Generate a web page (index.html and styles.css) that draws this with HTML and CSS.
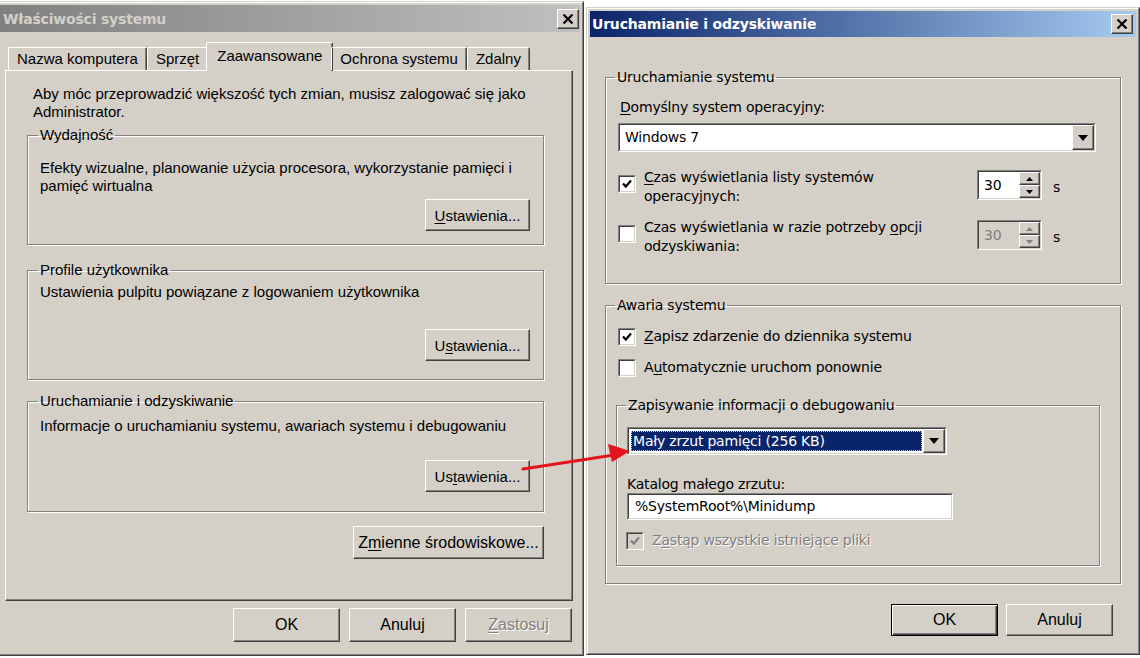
FILE: index.html
```html
<!DOCTYPE html>
<html lang="pl">
<head>
<meta charset="utf-8">
<title>Właściwości systemu</title>
<link rel="stylesheet" href="styles.css">
</head>
<body>
<div class="desk">

  <!-- System properties window (inactive) -->
  <section class="win win-left">
    <div class="win-in">
      <header class="caption caption-idle">
        <span class="caption-text">Właściwości systemu</span>
        <span class="cap-close"><svg width="12" height="10" viewBox="0 0 12 10"><path d="M1.5 0.5 L10.5 9.5 M10.5 0.5 L1.5 9.5" stroke="#000" stroke-width="2.2"/></svg></span>
      </header>
      <div class="left-body">
        <div class="tabs">
          <div class="tab">Nazwa komputera</div>
          <div class="tab">Sprzęt</div>
          <div class="tab tab-on">Zaawansowane</div>
          <div class="tab">Ochrona systemu</div>
          <div class="tab">Zdalny</div>
        </div>
        <div class="panel">
          <p class="intro">Aby móc przeprowadzić większość tych zmian, musisz zalogować się jako<br>Administrator.</p>

          <fieldset class="grp grp-perf">
            <legend>Wydajność</legend>
            <p class="desc">Efekty wizualne, planowanie użycia procesora, wykorzystanie pamięci i<br>pamięć wirtualna</p>
            <button class="btn btn-set"><u>U</u>stawienia...</button>
          </fieldset>

          <fieldset class="grp grp-prof">
            <legend>Profile użytkownika</legend>
            <p class="desc">Ustawienia pulpitu powiązane z logowaniem użytkownika</p>
            <button class="btn btn-set">U<u>s</u>tawienia...</button>
          </fieldset>

          <fieldset class="grp grp-boot">
            <legend>Uruchamianie i odzyskiwanie</legend>
            <p class="desc">Informacje o uruchamianiu systemu, awariach systemu i debugowaniu</p>
            <button class="btn btn-set">Us<u>t</u>awienia...</button>
          </fieldset>

          <button class="btn btn-env">Z<u>m</u>ienne środowiskowe...</button>
        </div>
        <div class="foot foot-left">
          <button class="btn">OK</button>
          <button class="btn">Anuluj</button>
          <button class="btn dis"><u>Z</u>astosuj</button>
        </div>
      </div>
    </div>
  </section>

  <!-- Startup and recovery dialog (active) -->
  <section class="win win-right">
    <div class="win-in">
      <header class="caption caption-live">
        <span class="caption-text">Uruchamianie i odzyskiwanie</span>
        <span class="cap-close"><svg width="12" height="10" viewBox="0 0 12 10"><path d="M1.5 0.5 L10.5 9.5 M10.5 0.5 L1.5 9.5" stroke="#000" stroke-width="2.2"/></svg></span>
      </header>
      <div class="right-body">

        <fieldset class="grp grp-r grp-start">
          <legend>Uruchamianie systemu</legend>
          <div class="lbl lbl-os"><u>D</u>omyślny system operacyjny:</div>
          <div class="field combo combo-os">
            <div class="field-in">
              <span class="combo-val">Windows 7</span>
              <span class="drop"><svg width="10" height="6" viewBox="0 0 10 6"><path d="M0 0 H10 L5 6 Z" fill="#000"/></svg></span>
            </div>
          </div>

          <div class="opt-row opt-first">
            <span class="field cb"><span class="field-in"><svg width="12" height="12" viewBox="0 0 12 12"><path d="M2 5.5 L4.8 8.5 L10 2.5" fill="none" stroke="#000" stroke-width="2.2"/></svg></span></span>
            <span class="opt-text"><u>C</u>zas wyświetlania listy systemów<br>operacyjnych:</span>
            <span class="field spin">
              <span class="field-in">
                <span class="spin-val">30</span>
                <span class="spin-btns">
                  <span class="spin-b"><svg width="7" height="4" viewBox="0 0 7 4"><path d="M0 4 L3.5 0 L7 4 Z" fill="#000"/></svg></span>
                  <span class="spin-b"><svg width="7" height="4" viewBox="0 0 7 4"><path d="M0 0 H7 L3.5 4 Z" fill="#000"/></svg></span>
                </span>
              </span>
            </span>
            <span class="unit">s</span>
          </div>

          <div class="opt-row">
            <span class="field cb"><span class="field-in"></span></span>
            <span class="opt-text">Czas wyświetlania w razie potrzeby <u>o</u>pcji<br>odzyskiwania:</span>
            <span class="field spin spin-off">
              <span class="field-in">
                <span class="spin-val">30</span>
                <span class="spin-btns">
                  <span class="spin-b"><svg width="7" height="4" viewBox="0 0 7 4"><path d="M0 4 L3.5 0 L7 4 Z" fill="#808080"/></svg></span>
                  <span class="spin-b"><svg width="7" height="4" viewBox="0 0 7 4"><path d="M0 0 H7 L3.5 4 Z" fill="#808080"/></svg></span>
                </span>
              </span>
            </span>
            <span class="unit">s</span>
          </div>
        </fieldset>

        <fieldset class="grp grp-r grp-crash">
          <legend>Awaria systemu</legend>
          <div class="chk-row chk-log">
            <span class="field cb"><span class="field-in"><svg width="12" height="12" viewBox="0 0 12 12"><path d="M2 5.5 L4.8 8.5 L10 2.5" fill="none" stroke="#000" stroke-width="2.2"/></svg></span></span>
            <span class="chk-text"><u>Z</u>apisz zdarzenie do dziennika systemu</span>
          </div>
          <div class="chk-row chk-restart">
            <span class="field cb"><span class="field-in"></span></span>
            <span class="chk-text">A<u>u</u>tomatycznie uruchom ponownie</span>
          </div>

          <fieldset class="grp grp-r grp-debug">
            <legend>Zapisywanie informacji o debugowaniu</legend>
            <div class="field combo combo-dump">
              <div class="field-in">
                <span class="combo-val sel">Mały zrzut pamięci (256 KB)</span>
                <span class="drop"><svg width="10" height="6" viewBox="0 0 10 6"><path d="M0 0 H10 L5 6 Z" fill="#000"/></svg></span>
              </div>
            </div>
            <div class="lbl lbl-dir">Katalog małego zrzutu:</div>
            <div class="field text-box"><div class="field-in">%SystemRoot%\Minidump</div></div>
            <div class="chk-row chk-over">
              <span class="field cb cb-off"><span class="field-in"><svg width="12" height="12" viewBox="0 0 12 12"><path d="M2 5.5 L4.8 8.5 L10 2.5" fill="none" stroke="#808080" stroke-width="2.2"/></svg></span></span>
              <span class="chk-text dis">Z<u>a</u>stąp wszystkie istniejące pliki</span>
            </div>
          </fieldset>
        </fieldset>

        <div class="foot foot-right">
          <button class="btn btn-default">OK</button>
          <button class="btn">Anuluj</button>
        </div>
      </div>
    </div>
  </section>

  <!-- red annotation arrow linking the two windows -->
  <svg class="arrow" width="1140" height="658" viewBox="0 0 1140 658">
    <path d="M523 469 L614 455" stroke="#e4141c" stroke-width="3.2" stroke-linecap="round" fill="none"/>
    <path d="M630 451 L608 444 L612 462 Z" fill="#e4141c"/>
  </svg>
</div>
</body>
</html>
```

FILE: styles.css
```css
* { box-sizing: border-box; }

html, body { margin: 0; padding: 0; }

body {
  width: 1140px;
  height: 658px;
  overflow: hidden;
  background: #fff;
  font-family: "Liberation Sans", Arial, sans-serif;
  font-size: 15px;
  color: #000;
}

.desk {
  position: relative;
  display: flex;
  align-items: flex-start;
  height: 658px;
}

p { margin: 0; }
u { text-decoration-thickness: 1px; text-underline-offset: 2px; }

/* ---------- window frames ---------- */
.win {
  background: #d4d0c8;
  border: 1px solid;
  border-color: #d4d0c8 #404040 #404040 #d4d0c8;
}
.win-in {
  height: 100%;
  border: 1px solid;
  border-color: #fff #808080 #808080 #fff;
  padding: 2px;
  display: flex;
  flex-direction: column;
}
.win-left {
  width: 584px;
  height: 655px;
  margin-top: 1px;
  border-left: 0;
}
.win-left .win-in { border-left: 0; padding-left: 0; }

.win-right {
  width: 554px;
  height: 648px;
  margin: 7px 0 0 2px;
}

/* ---------- captions ---------- */
.caption {
  flex: none;
  height: 27px;
  display: flex;
  align-items: center;
  justify-content: space-between;
  padding: 0 1px 0 3px;
  font-family: "DejaVu Sans", sans-serif;
  font-weight: bold;
  font-size: 14px;
  letter-spacing: -0.2px;
}
.caption-idle {
  background: linear-gradient(to right, #808080, #c0c0c0);
  color: #d4d0c8;
}
.caption-live {
  height: 26px;
  padding: 0 3px 0 2px;
  background: linear-gradient(to right, #0a246a, #a6caf0);
  color: #fff;
}
.cap-close {
  width: 22px;
  height: 20px;
  display: flex;
  align-items: center;
  justify-content: center;
  background: #d4d0c8;
  border: 1px solid;
  border-color: #fff #404040 #404040 #fff;
  box-shadow: inset -1px -1px #808080;
}

/* ---------- buttons ---------- */
.btn {
  font: inherit;
  color: #000;
  background: #d4d0c8;
  border: 1px solid;
  border-color: #fff #404040 #404040 #fff;
  box-shadow: inset -1px -1px #808080;
  padding: 0;
  line-height: 1;
}
.btn-default {
  border-color: #000;
  box-shadow: inset 1px 1px #fff, inset -1px -1px #404040, inset -2px -2px #808080;
}
.dis { color: #808080; text-shadow: 1px 1px 0 #fff; }

/* ---------- left window body ---------- */
.left-body {
  flex: 1;
  display: flex;
  flex-direction: column;
  padding: 0 7px 0 5px;
}

.tabs {
  position: relative;
  z-index: 1;
  display: flex;
  align-items: flex-end;
  height: 28px;
  margin: 10px 0 0 3px;
}
.tab {
  height: 23px;
  padding: 0 8px;
  border: 1px solid;
  border-bottom: 0;
  border-color: #fff #404040 transparent #fff;
  border-radius: 2px 2px 0 0;
  box-shadow: inset -1px 0 #808080;
  line-height: 22px;
  white-space: nowrap;
}
.tab-on {
  height: 29px;
  margin: 0 -2px -1px;
  padding: 0 10px;
  background: #d4d0c8;
  line-height: 26px;
}

.panel {
  height: 531px;
  display: flex;
  flex-direction: column;
  border: 1px solid;
  border-color: #fff #404040 #404040 #fff;
  box-shadow: inset -1px -1px #808080;
  padding: 14px 28px 0 21px;
}
.intro { margin-left: 6px; line-height: 18px; }

/* etched group boxes */
.grp {
  margin: 0;
  min-width: 0;
  border: 1px solid #808080;
  box-shadow: inset 1px 1px #fff, 1px 1px #fff;
  padding: 0 13px 13px 12px;
}
.grp legend {
  padding: 0 2px;
  margin-left: -2px;
  line-height: 18px;
}
.desc { line-height: 18px; }

.btn-set {
  display: block;
  width: 105px;
  height: 32px;
  margin-left: auto;
}
.grp-perf { margin-top: 5px; }
.grp-perf .desc { margin-top: 15px; }
.grp-perf .btn-set { margin-top: 4px; }

.grp-prof { margin-top: 16px; padding-bottom: 18px; }
.grp-prof .desc { margin-top: 4px; }
.grp-prof .btn-set { margin-top: 28px; }

.grp-boot { margin-top: 12px; padding-bottom: 19px; }
.grp-boot .desc { margin-top: 7px; }
.grp-boot .btn-set { margin-top: 25px; }

.btn-env {
  align-self: flex-end;
  width: 191px;
  height: 33px;
  margin-top: 14px;
  font-size: 16px;
}

.foot {
  display: flex;
  justify-content: flex-end;
}
.foot-left {
  gap: 9px;
  margin-top: 7px;
  padding-right: 1px;
}
.foot-left .btn { width: 107px; height: 34px; font-size: 16px; }

/* ---------- right window body ---------- */
.right-body {
  flex: 1;
  display: flex;
  flex-direction: column;
  padding: 0 15px;
  font-family: "DejaVu Sans", sans-serif;
  font-size: 14px;
  letter-spacing: -0.2px;
  line-height: 19px;
}

.grp-r { padding: 0 24px 27px 12px; }
.grp-r legend { margin-left: -3px; }

.grp-start { margin-top: 31px; }
.grp-crash { margin-top: 12px; padding-bottom: 17px; }

.lbl { line-height: 18px; }
.lbl-os { margin: 12px 0 0 2px; }

/* sunken fields */
.field {
  display: block;
  border: 1px solid;
  border-color: #808080 #fff #fff #808080;
}
.field-in {
  height: 100%;
  border: 1px solid;
  border-color: #404040 #d4d0c8 #d4d0c8 #404040;
  background: #fff;
}

.combo .field-in {
  display: flex;
  align-items: stretch;
}
.combo-val {
  flex: 1;
  display: flex;
  align-items: center;
  padding-left: 5px;
}
.drop {
  width: 22px;
  display: flex;
  align-items: center;
  justify-content: center;
  background: #d4d0c8;
  border: 1px solid;
  border-color: #fff #404040 #404040 #fff;
  box-shadow: inset -1px -1px #808080;
}
.combo-os { height: 29px; margin-top: 7px; }

.opt-row {
  display: flex;
  align-items: flex-start;
  margin-top: 12px;
}
.opt-first { margin-top: 16px; }
.opt-row .cb { margin-top: 7px; }
.opt-text { flex: 1; margin-left: 8px; }

.cb {
  flex: none;
  width: 18px;
  height: 18px;
}
.cb .field-in {
  display: flex;
  align-items: center;
  justify-content: center;
}
.cb-off .field-in { background: #d4d0c8; }

.spin {
  flex: none;
  width: 65px;
  height: 30px;
  margin-top: 2px;
}
.spin .field-in { display: flex; }
.spin-val {
  flex: 1;
  display: flex;
  align-items: center;
  padding-left: 5px;
}
.spin-btns {
  width: 21px;
  display: flex;
  flex-direction: column;
  background: #fff;
}
.spin-b {
  flex: 1;
  display: flex;
  align-items: center;
  justify-content: center;
  background: #d4d0c8;
  border: 1px solid;
  border-color: #fff #404040 #404040 #fff;
  box-shadow: inset -1px -1px #808080;
}
.spin-off .field-in { background: #d4d0c8; }
.spin-off .spin-val { color: #808080; }
.spin-off .spin-btns { background: #d4d0c8; }

.unit {
  flex: none;
  width: 54px;
  padding-left: 11px;
  margin-top: 10px;
}

.chk-row {
  display: flex;
  align-items: center;
  height: 19px;
}
.chk-text { margin-left: 8px; }
.chk-log { margin-top: 13px; }
.chk-restart { margin-top: 12px; }

.grp-debug {
  margin: 19px -4px 0 -2px;
  padding: 0 10px 15px 10px;
}
.grp-debug legend { margin-left: -1px; }

.combo-dump {
  width: 320px;
  height: 28px;
  margin-top: 13px;
}
.combo-dump .combo-val.sel {
  margin: 2px 1px 2px 2px;
  padding-left: 2px;
  background: #0a246a;
  color: #fff;
  outline: 1px dotted #d8d49c;
  outline-offset: -1px;
}

.lbl-dir { margin-top: 20px; }

.text-box {
  width: 326px;
  height: 27px;
}
.text-box .field-in {
  display: flex;
  align-items: center;
  padding-left: 6px;
}

.chk-over { margin-top: 11px; }
.chk-over .cb { margin-left: -1px; }

.foot-right {
  gap: 8px;
  margin-top: 20px;
  padding-right: 8px;
}
.foot-right .btn { width: 107px; height: 32px; font-family: "Liberation Sans", Arial, sans-serif; font-size: 16px; letter-spacing: 0; }

/* annotation overlay */
.arrow {
  position: absolute;
  left: 0;
  top: 0;
  pointer-events: none;
}
```
